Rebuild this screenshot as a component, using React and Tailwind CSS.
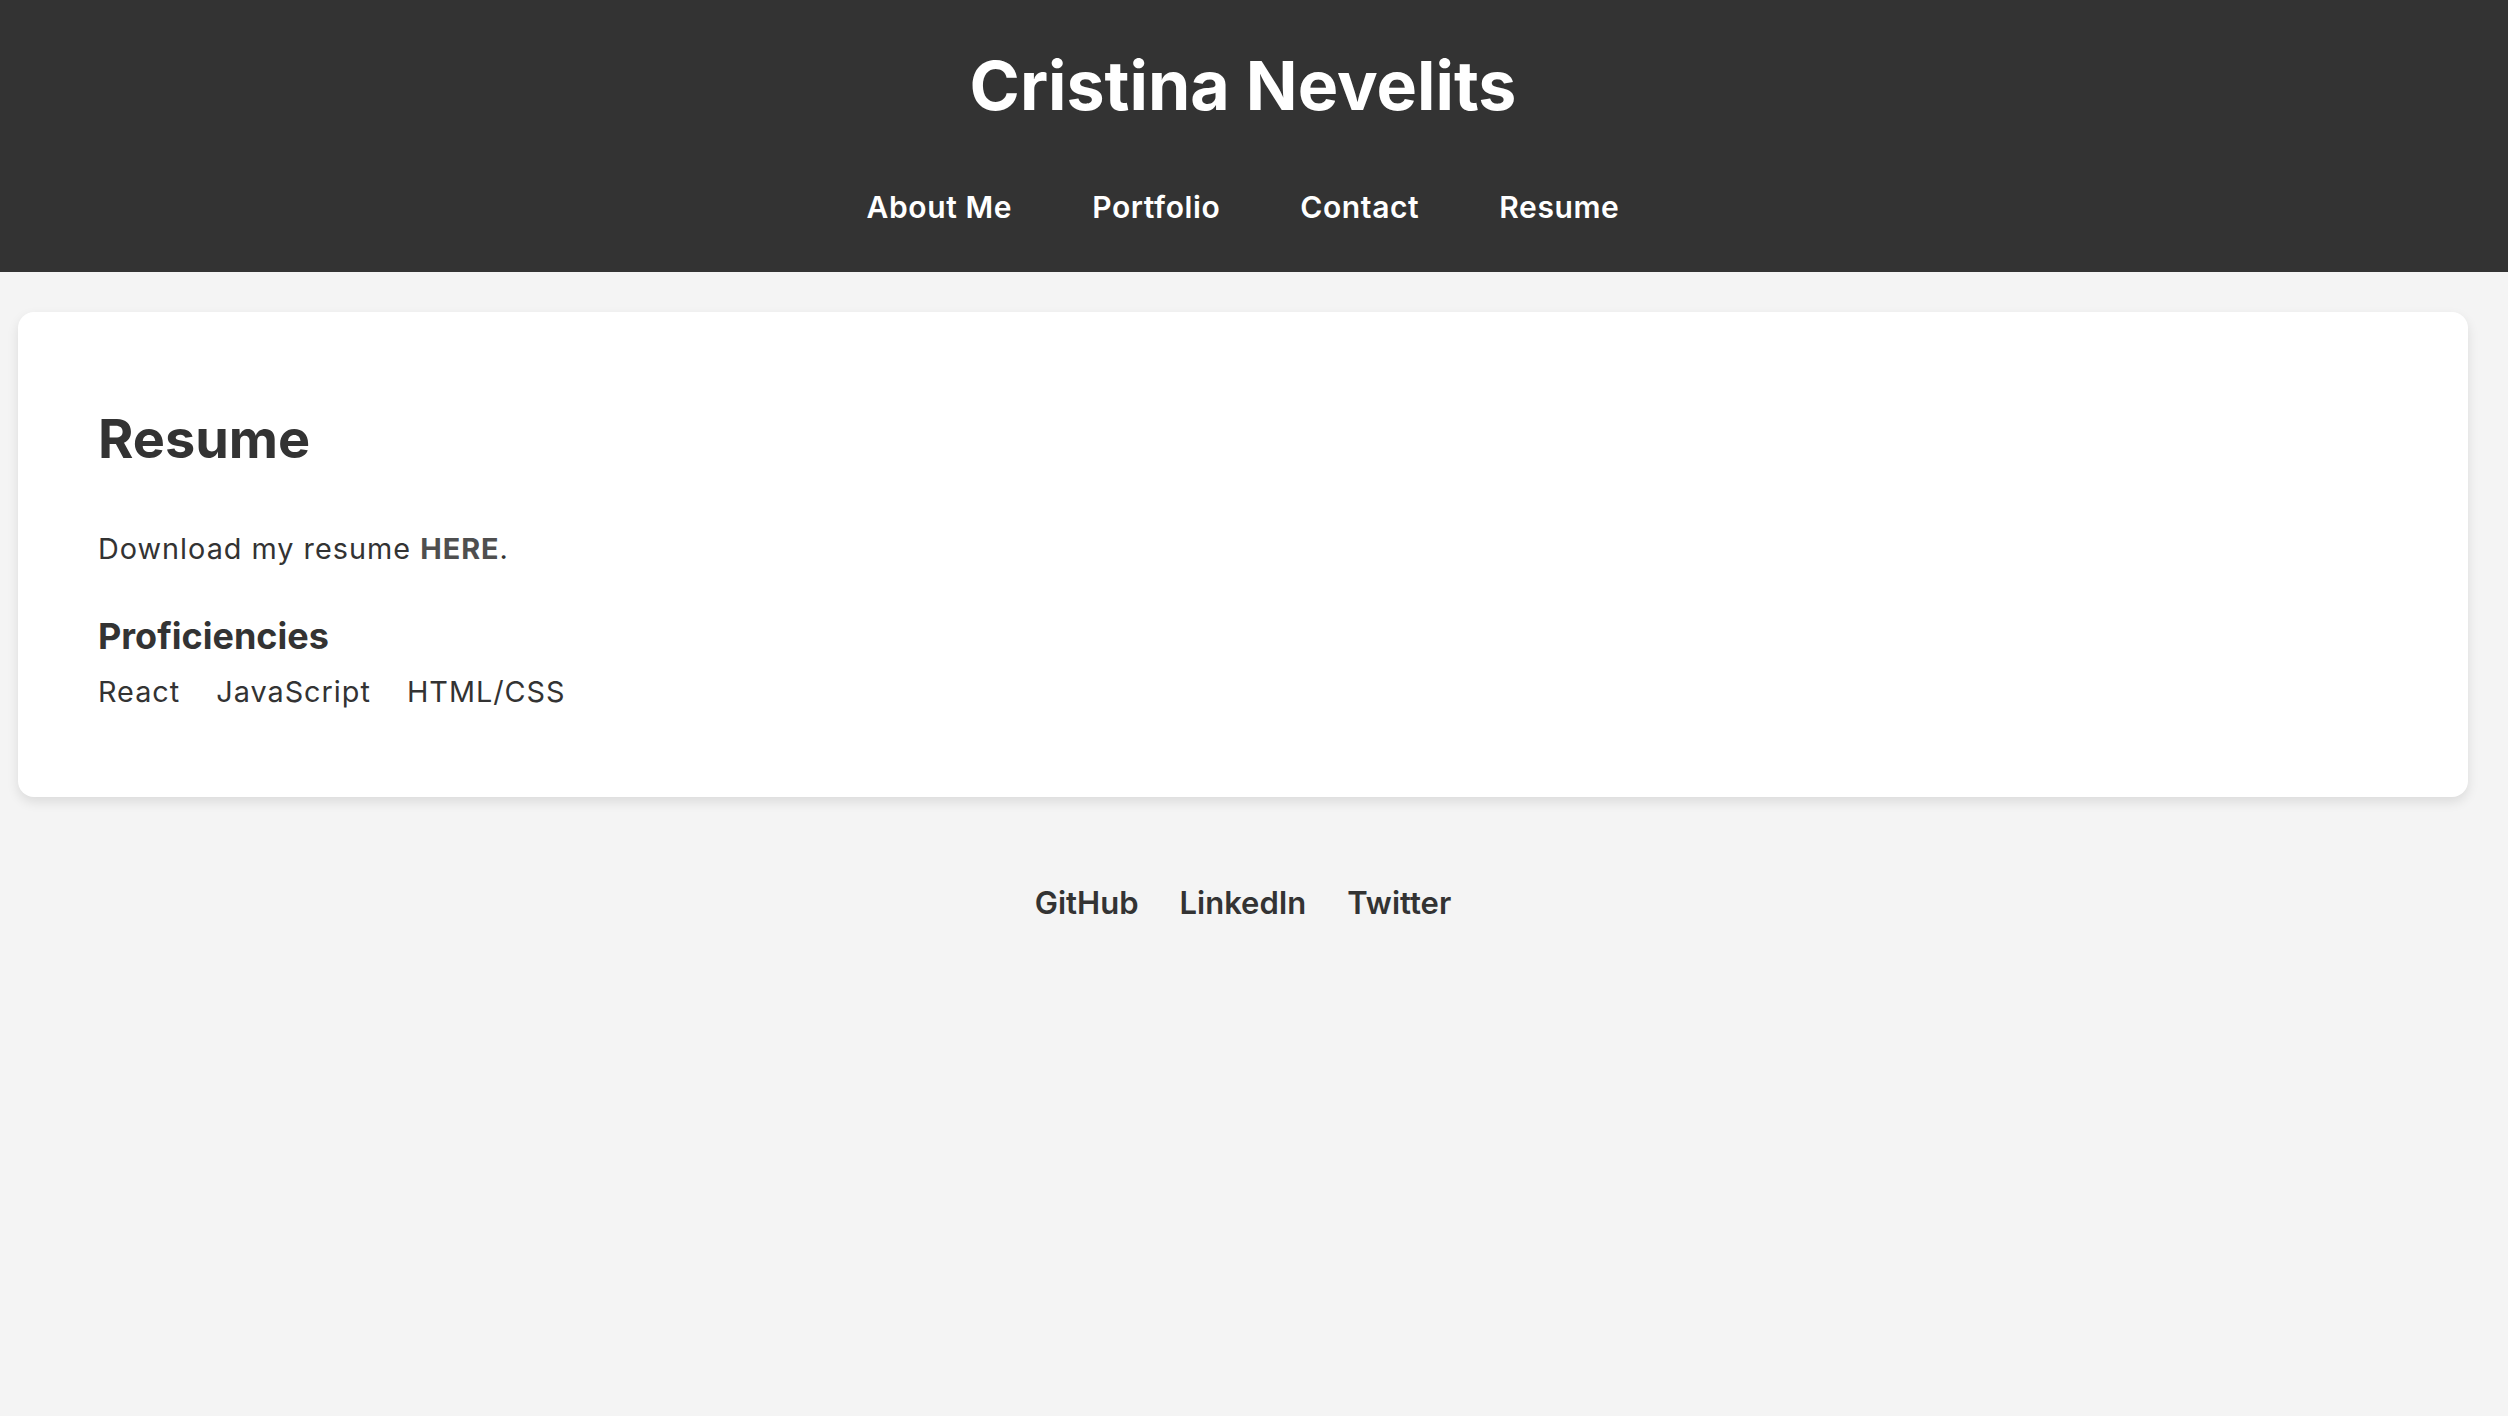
export default function App() {
  const font = { fontFamily: 'Inter, "Noto Sans", sans-serif' };
  return (
    <div className="min-h-[1416px] w-full bg-[#f4f4f4] text-[#333]" style={font}>
      <header className="w-full bg-[#333]">
        <div className="w-[2486px] flex flex-col items-center pt-[51px] pb-[50px]">
          <h1 className="text-[68px] leading-none font-bold text-white">Cristina Nevelits</h1>
          <nav className="mt-[73px] flex gap-[80px] text-[30px] leading-none font-semibold tracking-[0.6px] text-white">
            <a>About Me</a>
            <a>Portfolio</a>
            <a>Contact</a>
            <a>Resume</a>
          </nav>
        </div>
      </header>
      <main className="w-[2486px] px-[18px] pt-[40px]">
        <section className="bg-white rounded-[16px] shadow-[0_5px_12px_rgba(0,0,0,0.1)] pl-[80px] pt-[100px] pb-[90px]">
          <h2 className="text-[54px] leading-none font-bold">Resume</h2>
          <p className="mt-[69px] text-[28.8px] leading-none tracking-[1px]">
            Download my resume <a className="font-bold text-[#4f4f4f]">HERE</a>.
          </p>
          <h3 className="mt-[54px] text-[36px] leading-none font-bold">Proficiencies</h3>
          <div className="mt-[24px] flex gap-[36px] text-[28.8px] leading-none tracking-[1px]">
            <span>React</span>
            <span>JavaScript</span>
            <span>HTML/CSS</span>
          </div>
        </section>
      </main>
      <footer className="w-[2486px] flex justify-center gap-[41px] pt-[90px] text-[31px] leading-none font-semibold">
        <a>GitHub</a>
        <a>LinkedIn</a>
        <a>Twitter</a>
      </footer>
    </div>
  );
}
